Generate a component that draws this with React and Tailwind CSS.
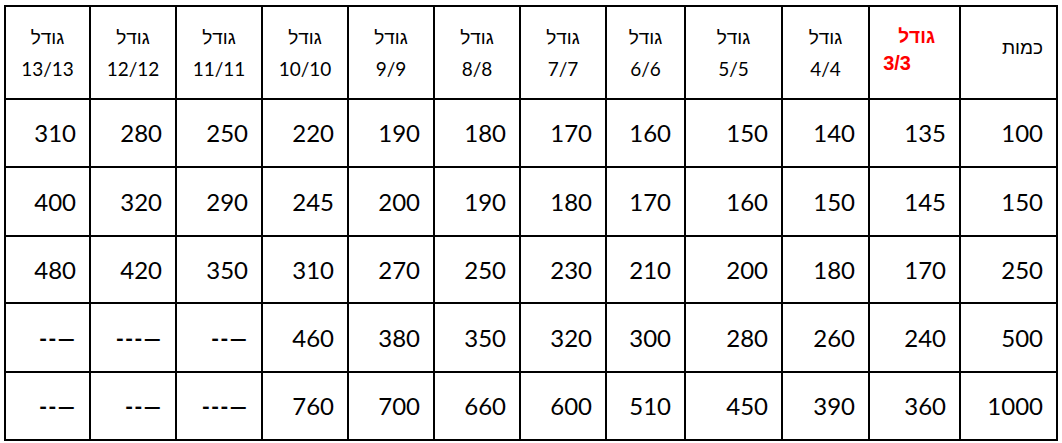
import React from 'react';

const sizes = ['4/4', '5/5', '6/6', '7/7', '8/8', '9/9', '10/10', '11/11', '12/12', '13/13'];
// widths in RTL order: כמות, 3/3, 4/4 ... 13/13
const widths = [97, 91, 87, 97, 79, 86, 86, 86, 86, 86, 86, 85];

const rows = [
  ['100', '135', '140', '150', '160', '170', '180', '190', '220', '250', '280', '310'],
  ['150', '145', '150', '160', '170', '180', '190', '200', '245', '290', '320', '400'],
  ['250', '170', '180', '200', '210', '230', '250', '270', '310', '350', '420', '480'],
  ['500', '240', '260', '280', '300', '320', '350', '380', '460', '--—', '---—', '--—'],
  ['1000', '360', '390', '450', '510', '600', '660', '700', '760', '---—', '--—', '--—'],
];
const rowHeights = ['h-[68px]', 'h-[69px]', 'h-[67px]', 'h-[69px]', 'h-[68px]'];

export default function App() {
  return (
    <div className="bg-white w-[1062px] h-[443px] pl-[4px] pt-[5px]" style={{ fontFamily: 'Lato, "Liberation Sans", "DejaVu Sans", sans-serif' }}>
      <table dir="rtl" className="table-fixed border-collapse w-[1052px] text-black">
        <colgroup>
          {widths.map((w, i) => (
            <col key={i} style={{ width: w }} />
          ))}
        </colgroup>
        <thead>
          <tr className="h-[93px]">
            <th className="border-2 border-black align-top pt-[24px] pr-[13px] text-right font-normal text-[19px] leading-[32px]">כמות</th>
            <th className="border-2 border-black align-middle font-bold text-[19px] leading-[27px] text-[#ff0000] pb-[6px]" style={{ fontFamily: '"Liberation Sans", Arial, sans-serif' }}>
              <div className="text-right pr-[24px]">גודל</div>
              <div className="text-right pr-[48px] text-[20px]">3/3</div>
            </th>
            {sizes.map((s) => (
              <th key={s} className="border-2 border-black align-middle text-center font-normal text-[19px] leading-[32px]">
                <div>גודל</div>
                <div>{s}</div>
              </th>
            ))}
          </tr>
        </thead>
        <tbody>
          {rows.map((r, i) => (
            <tr key={i} className={rowHeights[i]}>
              {r.map((v, j) => (
                <td key={j} className="border-2 border-black text-right pr-[13px] align-middle text-[24px]">
                  {v.includes('—') ? (
                    <span dir="ltr" className="inline-block text-[22px] font-bold tracking-[1px]">{v}</span>
                  ) : (
                    v
                  )}
                </td>
              ))}
            </tr>
          ))}
        </tbody>
      </table>
    </div>
  );
}
